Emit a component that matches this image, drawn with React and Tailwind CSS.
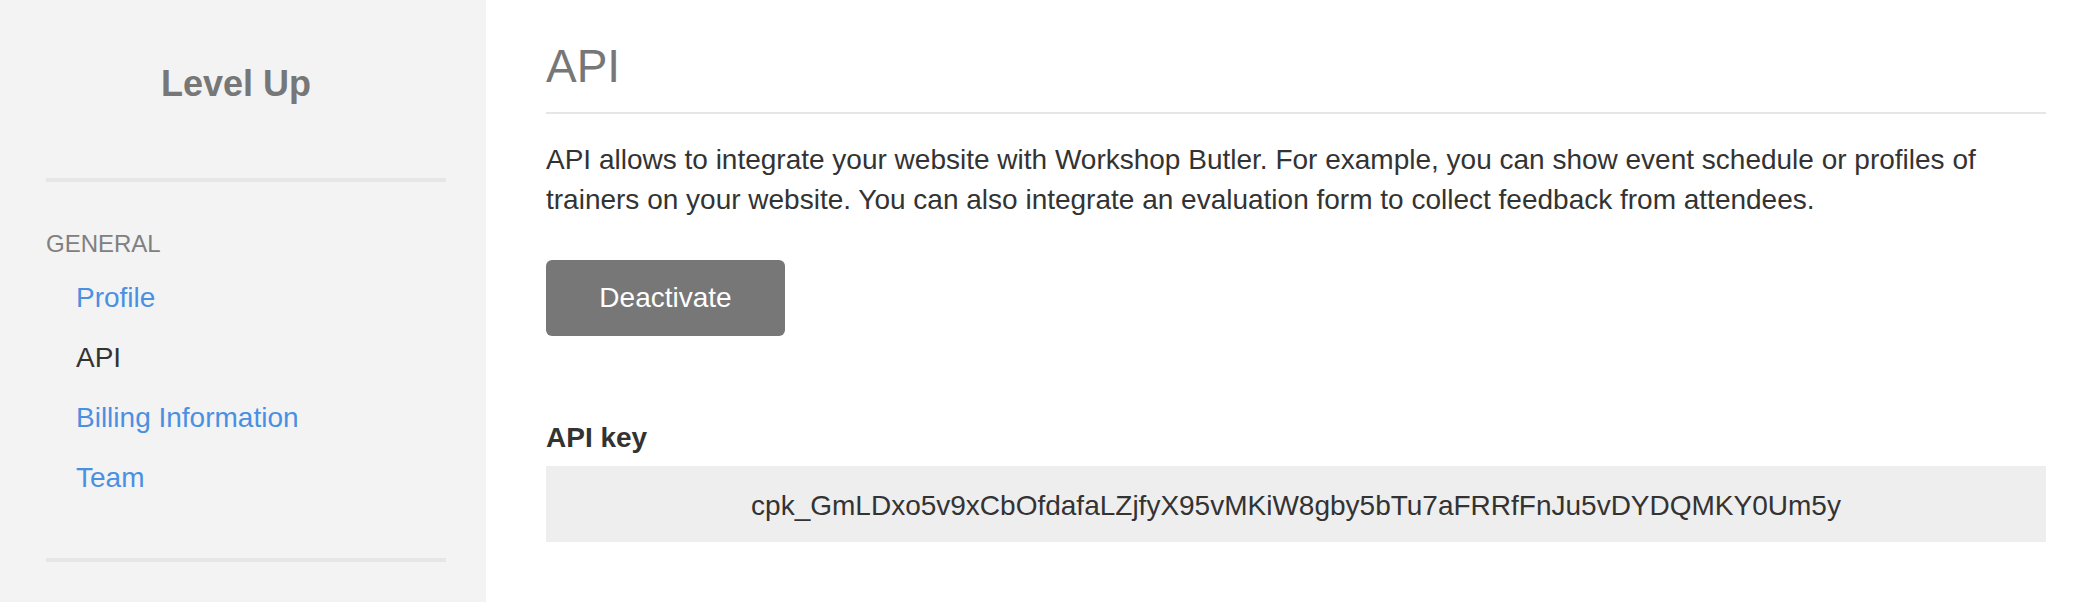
export default function App() {
  const nav = [
    { label: "Profile", active: false },
    { label: "API", active: true },
    { label: "Billing Information", active: false },
    { label: "Team", active: false },
  ];

  return (
    <div className="flex w-full h-[602px] bg-white font-['Liberation_Sans',Arial,sans-serif] overflow-hidden">
      <aside className="w-[486px] shrink-0 h-full bg-[#f3f3f3] pl-[46px] pr-[40px]">
        <div className="pt-[64px] pr-[20px] text-center text-[36px] leading-[40px] font-bold text-[#777777]">
          Level Up
        </div>
        <div className="mt-[74px] h-[4px] bg-[#e6e6e6]" />
        <div className="mt-[45px] text-[24px] leading-[34px] text-[#808080] uppercase">General</div>
        <ul className="mt-[17px]">
          {nav.map((item) => (
            <li key={item.label} className="h-[60px] pl-[30px] text-[28px] leading-[40px]">
              <a className={item.active ? "text-[#333333]" : "text-[#4a90e2]"}>{item.label}</a>
            </li>
          ))}
        </ul>
        <div className="mt-[40px] h-[4px] bg-[#e6e6e6]" />
      </aside>

      <main className="flex-1 pl-[60px] pr-[40px]">
        <h1 className="pt-[41px] text-[46px] leading-[50px] font-normal text-[#777777]">API</h1>
        <div className="mt-[21px] h-[2px] bg-[#e6e6e6]" />
        <p className="mt-[26px] text-[28px] leading-[40px] text-[#333333]">
          API allows to integrate your website with Workshop Butler. For example, you can show event schedule or profiles of
          trainers on your website. You can also integrate an evaluation form to collect feedback from attendees.
        </p>
        <button className="mt-[40px] w-[239px] h-[76px] rounded-[6px] bg-[#777777] text-white text-[28px] leading-[40px]">
          Deactivate
        </button>
        <div className="mt-[82px] text-[28px] leading-[40px] font-bold text-[#333333]">API key</div>
        <div className="mt-[8px] h-[76px] bg-[#eeeeee] pt-[20px] text-center text-[28px] leading-[40px] text-[#333333]">
          cpk_GmLDxo5v9xCbOfdafaLZjfyX95vMKiW8gby5bTu7aFRRfFnJu5vDYDQMKY0Um5y
        </div>
      </main>
    </div>
  );
}
